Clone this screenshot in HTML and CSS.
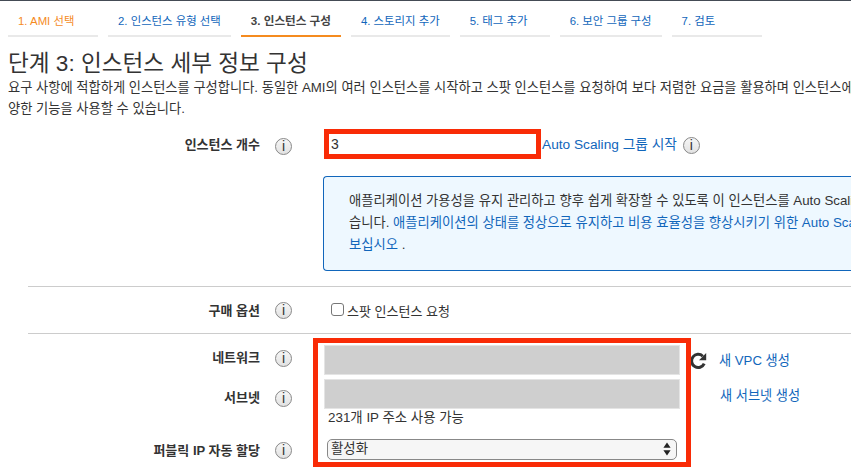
FILE: index.html
```html
<!DOCTYPE html>
<html lang="ko">
<head>
    <meta charset="UTF-8">
    <meta name="viewport" content="width=device-width, initial-scale=1.0">
    <title>인스턴스 세부 정보 구성</title>
    <link rel="stylesheet" href="styles.css">
</head>
<body>
    <div class="page">
        <ul class="tabs">
            <li class="tab done">1. AMI 선택</li>
            <li class="tab">2. 인스턴스 유형 선택</li>
            <li class="tab active">3. 인스턴스 구성</li>
            <li class="tab">4. 스토리지 추가</li>
            <li class="tab">5. 태그 추가</li>
            <li class="tab">6. 보안 그룹 구성</li>
            <li class="tab">7. 검토</li>
        </ul>

        <h1>단계 3: 인스턴스 세부 정보 구성</h1>
        <p class="intro">요구 사항에 적합하게 인스턴스를 구성합니다. 동일한 AMI의 여러 인스턴스를 시작하고 스팟 인스턴스를 요청하여 보다 저렴한 요금을 활용하며 인스턴스에<br>양한 기능을 사용할 수 있습니다.</p>

        <div class="row row-count">
            <div class="label">인스턴스 개수</div>
            <div class="help"><span class="info">i</span></div>
            <div class="field count-field">
                <div class="count-input">3</div>
                <a class="link" href="#">Auto Scaling 그룹 시작</a>
                <span class="info">i</span>
            </div>
        </div>

        <div class="notice">
            <p>애플리케이션 가용성을 유지 관리하고 향후 쉽게 확장할 수 있도록 이 인스턴스를 Auto Scaling 그룹으로 시작할 수 있<br>습니다. <a class="link" href="#">애플리케이션의 상태를 정상으로 유지하고 비용 효율성을 향상시키기 위한 Auto Scaling 이점을 알아</a><br><a class="link" href="#">보십시오</a> .</p>
        </div>

        <hr>

        <div class="row row-purchase">
            <div class="label">구매 옵션</div>
            <div class="help"><span class="info">i</span></div>
            <label class="field check"><span class="box"></span>스팟 인스턴스 요청</label>
        </div>

        <hr>

        <div class="network">
            <div class="row row-network">
                <div class="label">네트워크</div>
                <div class="help"><span class="info">i</span></div>
                <div class="field"><div class="hidden-value"></div></div>
                <div class="side">
                    <svg class="refresh" viewBox="0 0 18 18" width="18" height="18">
                        <path d="M15.2 11.6A6.6 6.6 0 1 1 13.8 4.2" fill="none" stroke="#333" stroke-width="3"/>
                        <path d="M17.2 1V8.2H10Z" fill="#333"/>
                    </svg>
                    <a class="link" href="#">새 VPC 생성</a>
                </div>
            </div>
            <div class="row row-subnet">
                <div class="label">서브넷</div>
                <div class="help"><span class="info">i</span></div>
                <div class="field">
                    <div class="hidden-value"></div>
                    <div class="hint">231개 IP 주소 사용 가능</div>
                </div>
                <div class="side"><a class="link" href="#">새 서브넷 생성</a></div>
            </div>
            <div class="row row-public">
                <div class="label">퍼블릭 IP 자동 할당</div>
                <div class="help"><span class="info">i</span></div>
                <div class="field">
                    <div class="select">
                        활성화
                        <svg class="arrows" viewBox="0 0 10 14" width="10" height="14">
                            <path d="M5 0.5 8.6 5.8H1.4Z M5 13.5 1.4 8.2H8.6Z" fill="#222"/>
                        </svg>
                    </div>
                </div>
            </div>
            <div class="highlight"></div>
        </div>
    </div>
</body>
</html>
```

FILE: styles.css
```css
* {
    box-sizing: border-box;
}
html, body {
    margin: 0;
    height: 100%;
    overflow: hidden;
}
body {
    font-family: "Liberation Sans", "Noto Sans CJK KR", sans-serif;
    font-size: 13px;
    color: #333;
    background: #fff;
}
.page {
    width: 851px;
    height: 472px;
    overflow: hidden;
    border-top: 1px solid #444b55;
}
a {
    text-decoration: none;
}
.link {
    color: #1166bb;
}

/* wizard steps */
.tabs {
    display: flex;
    gap: 10px;
    list-style: none;
    margin: 0;
    padding: 0 8px;
}
.tab {
    min-width: 90px;
    height: 36px;
    padding: 12px 10px 0;
    font-size: 11.4px;
    line-height: 16px;
    white-space: nowrap;
    color: #1166bb;
    border-bottom: 2px solid #e9e9e9;
}
.tab.done {
    color: #f58b1f;
}
.tab.active {
    color: #444;
    font-size: 11.6px;
    font-weight: bold;
    border-bottom-color: #f58b1f;
}

h1 {
    margin: 13px 0 0 8px;
    font-size: 22.6px;
    line-height: 27px;
    font-weight: normal;
    color: #333;
    white-space: nowrap;
}
.intro {
    margin: 0 0 0 8px;
    font-size: 13.25px;
    line-height: 21px;
    white-space: nowrap;
}

/* form rows */
.row {
    display: grid;
    grid-template-columns: 260px 63px 357px 1fr;
}
.label {
    text-align: right;
    font-weight: bold;
    white-space: nowrap;
}
.help {
    padding-left: 15px;
}
.info {
    display: inline-block;
    width: 17px;
    height: 17px;
    border: 1px solid #888;
    border-radius: 50%;
    background: linear-gradient(#f6f6f6, #e2e2e2);
    font-size: 14px;
    line-height: 15px;
    text-align: center;
    font-family: "Liberation Sans", sans-serif;
    color: #333;
}
.row-count {
    margin-top: 10px;
    height: 30px;
}
.row-count .label {
    padding-top: 5px;
}
.row-count .help {
    padding-top: 9px;
}
.count-field {
    grid-column: 3 / 5;
    display: flex;
    align-items: center;
    white-space: nowrap;
}
.count-input {
    width: 217px;
    height: 30px;
    margin-left: 1px;
    padding-left: 2px;
    border: 5px solid #f92b06;
    line-height: 20px;
    font-size: 14px;
}
.count-field .link {
    margin: -2px 0 0 1px;
    font-size: 13.7px;
}
.count-field .info {
    margin: 3px 0 0 6px;
}

.notice {
    width: 560px;
    height: 95px;
    margin: 17px 0 0 323px;
    padding: 13px 25px;
    border: 1px solid #1166bb;
    border-right: 0;
    border-radius: 4px 0 0 4px;
    background: #eef8ff;
    font-size: 13.3px;
    line-height: 22px;
    white-space: nowrap;
}
.notice p {
    margin: 0;
}
hr {
    margin: 0 0 0 28px;
    border: 0;
    border-top: 1px solid #ccc;
}
.notice + hr {
    margin-top: 15px;
}

.row-purchase {
    height: 46px;
    padding-top: 15px;
}
.row-purchase .label {
    margin-top: -2px;
}
.check {
    display: flex;
    align-items: flex-start;
    padding-left: 8px;
    grid-column: 3 / 5;
    margin-top: -1px;
}
.box {
    width: 13px;
    height: 13px;
    margin: 2px 3px 0 0;
    border: 1px solid #777;
    border-radius: 3px;
    background: #fff;
}

/* network block */
.network {
    position: relative;
    padding-top: 11px;
}
.network .field {
    padding-left: 1px;
}
.hidden-value {
    width: 356px;
    height: 30px;
    background: #cfcfcf;
    border: 1px solid #e4e4e4;
}
.row-network {
    height: 34px;
}
.row-network .label {
    padding-top: 2px;
}
.row-network .help {
    padding-top: 5px;
}
.row-subnet {
    height: 60px;
}
.row-subnet .label {
    padding-top: 8px;
}
.row-subnet .help {
    padding-top: 11px;
}
.hint {
    margin-left: 4px;
    font-size: 13.4px;
    line-height: 18px;
}
.side {
    display: flex;
    align-items: flex-start;
    gap: 12px;
    padding: 7px 0 0 9px;
    white-space: nowrap;
}
.row-subnet .side {
    padding: 8px 0 0 40px;
}
.refresh {
    flex: none;
}
.side .link {
    font-size: 13.2px;
    line-height: 18px;
}
.row-public .label {
    padding-top: 1px;
}
.row-public .help {
    padding-top: 3px;
}
.select {
    position: relative;
    width: 350px;
    height: 21px;
    margin-left: 3px;
    padding-left: 3px;
    border: 1px solid #888;
    border-radius: 5px;
    background: #f6f6f6;
    font-size: 13.4px;
    line-height: 18px;
}
.arrows {
    position: absolute;
    right: 4px;
    top: 2px;
}

.highlight {
    position: absolute;
    left: 313px;
    top: 4px;
    width: 378px;
    height: 129px;
    border: 5px solid #f92b06;
    pointer-events: none;
}
```
